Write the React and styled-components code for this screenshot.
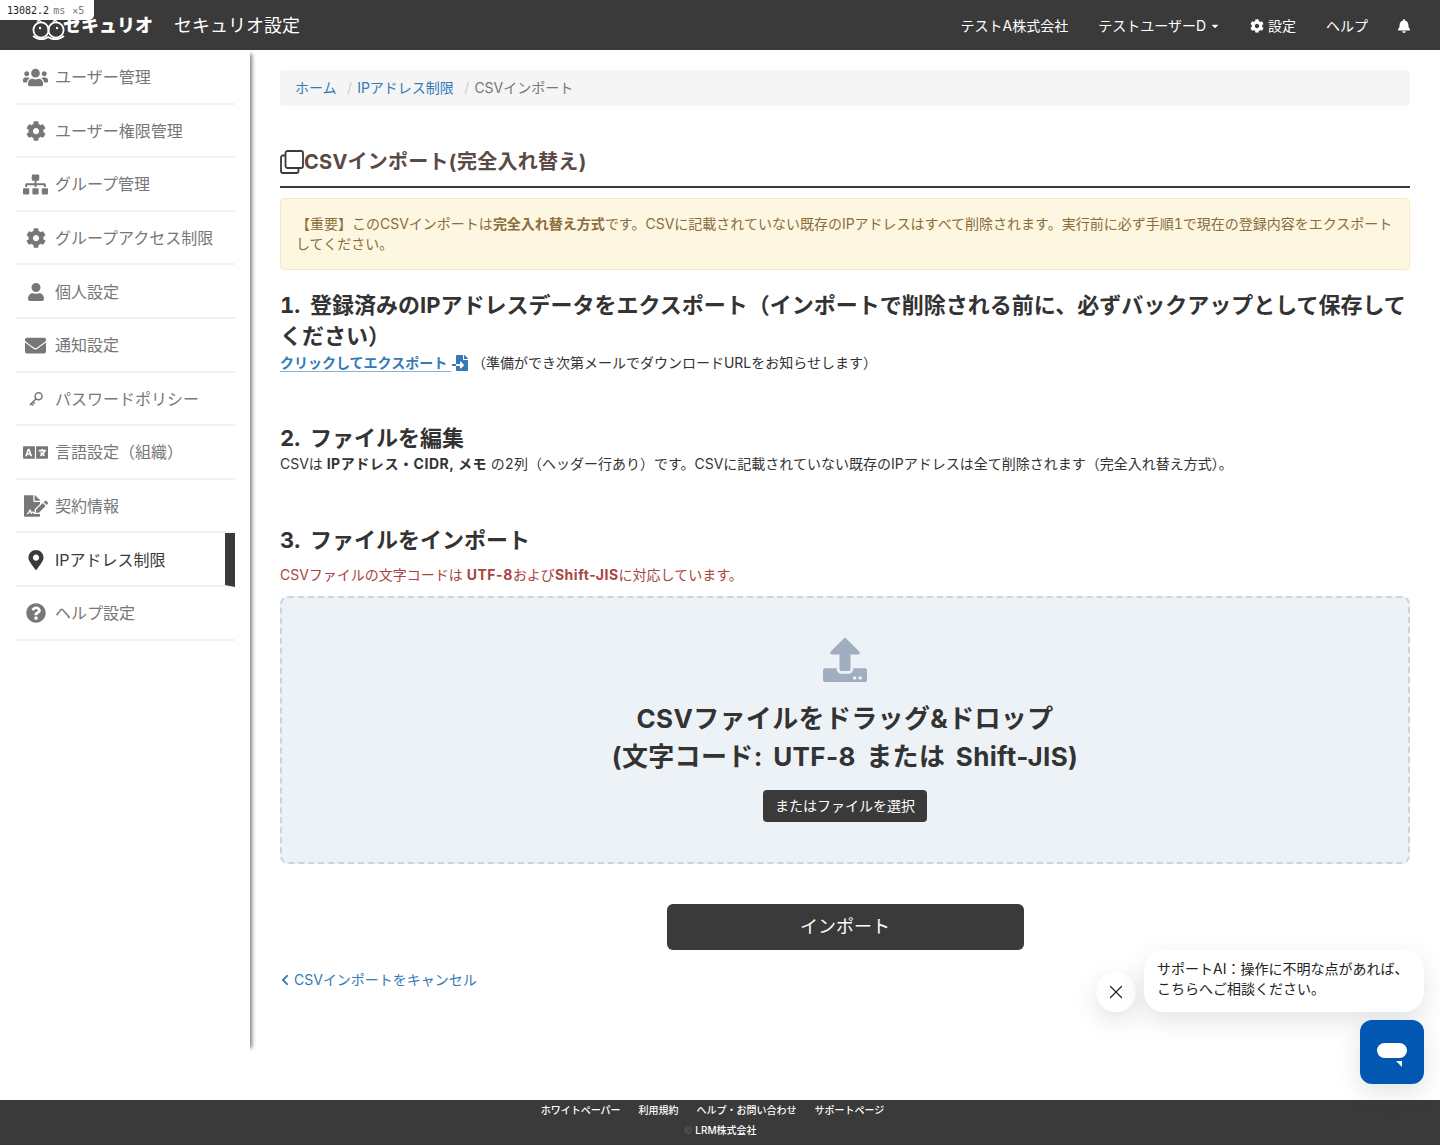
import React from 'react'
import styled, { createGlobalStyle } from 'styled-components'
import {
  FaUsers, FaCog, FaSitemap, FaUser, FaEnvelope, FaLanguage, FaFileSignature,
  FaMapMarkerAlt, FaQuestionCircle, FaBell, FaChevronLeft, FaFileImport, FaUpload, FaCaretDown,
} from 'react-icons/fa'
import { X } from 'lucide-react'

const KeyIcon = () => (
  <svg width="16" height="16" viewBox="0 0 16 16" fill="none" stroke="currentColor" strokeWidth="1.5" strokeLinecap="round">
    <circle cx="10.6" cy="5.2" r="3.5" />
    <path d="M8 7.8 L2.4 13.6 M3.4 12.4 L5 14 M5 10.8 L6.4 12.2" />
  </svg>
)

const menu = [
  { label: 'ユーザー管理', icon: <FaUsers size={25} /> },
  { label: 'ユーザー権限管理', icon: <FaCog size={20} /> },
  { label: 'グループ管理', icon: <FaSitemap size={25} /> },
  { label: 'グループアクセス制限', icon: <FaCog size={20} /> },
  { label: '個人設定', icon: <FaUser size={18} /> },
  { label: '通知設定', icon: <FaEnvelope size={21} /> },
  { label: 'パスワードポリシー', icon: <KeyIcon /> },
  { label: '言語設定（組織）', icon: <FaLanguage size={25} /> },
  { label: '契約情報', icon: <FaFileSignature size={24} /> },
  { label: 'IPアドレス制限', icon: <FaMapMarkerAlt size={20} />, active: true },
  { label: 'ヘルプ設定', icon: <FaQuestionCircle size={20} /> },
]

const footerLinks = ['ホワイトペーパー', '利用規約', 'ヘルプ・お問い合わせ', 'サポートページ']

const OwlLogo = () => (
  <LogoMark width="33" height="22" viewBox="0 0 33 22" fill="none" stroke="#fff" strokeWidth="1.8">
    <circle cx="9" cy="12" r="7.6" />
    <circle cx="24" cy="12" r="7.6" />
    <path d="M5 4 L7 2 L9 4 M21 4 L23 2 L25 4" strokeWidth="1.4" />
    <circle cx="8" cy="10" r="1.2" fill="#fff" stroke="none" />
    <circle cx="25" cy="10" r="1.2" fill="#fff" stroke="none" />
    <path d="M1 18 Q9 24 16 19 Q24 24 32 18" />
  </LogoMark>
)

const CopyIcon = () => (
  <svg width="24" height="24" viewBox="0 0 24 24" fill="none" stroke="#3a3a3a" strokeWidth="1.8" strokeLinejoin="round">
    <rect x="5.5" y="1" width="17.5" height="17" rx="2" />
    <path d="M5.5 5.5 H3 a2 2 0 0 0 -2 2 V21 a2 2 0 0 0 2 2 H16.5 a2 2 0 0 0 2 -2 V18" />
  </svg>
)

const ChatIcon = () => (
  <svg width="32" height="26" viewBox="0 0 32 26" fill="#fff">
    <rect x="1" y="1" width="30" height="15" rx="7.5" />
    <path d="M20 19 L26 19 L26 25 Z" />
  </svg>
)

export default function App() {
  return (
    <Page>
      <GlobalStyle />
      <PerfTab>
        13082.2<PerfUnit>ms</PerfUnit><PerfCount>✕5</PerfCount>
      </PerfTab>

      <Header>
        <Brand>
          <OwlLogo />
          <LogoText>セキュリオ</LogoText>
          <AppTitle>セキュリオ設定</AppTitle>
        </Brand>
        <Nav>
          <NavItem>テストA株式会社</NavItem>
          <NavItem>テストユーザーD<FaCaretDown size={10} /></NavItem>
          <NavItem><FaCog size={14} />設定</NavItem>
          <NavItem>ヘルプ</NavItem>
          <NavItem $tight><FaBell size={14} /></NavItem>
        </Nav>
      </Header>

      <Body>
        <Sidebar>
          {menu.map(item => (
            <MenuItem key={item.label} $active={item.active}>
              <MenuIcon>{item.icon}</MenuIcon>
              {item.label}
            </MenuItem>
          ))}
        </Sidebar>

        <Main>
          <Breadcrumb>
            <Crumb href="#">ホーム</Crumb>
            <CrumbSep>/</CrumbSep>
            <Crumb href="#">IPアドレス制限</Crumb>
            <CrumbSep>/</CrumbSep>
            <span>CSVインポート</span>
          </Breadcrumb>

          <PageTitle><CopyIcon />CSVインポート(完全入れ替え)</PageTitle>

          <Alert>
            【重要】このCSVインポートは<strong>完全入れ替え方式</strong>です。CSVに記載されていない既存のIPアドレスはすべて削除されます。実行前に必ず手順1で現在の登録内容をエクスポートしてください。
          </Alert>

          <Section>
            <StepTitle>1. 登録済みのIPアドレスデータをエクスポート（インポートで削除される前に、必ずバックアップとして保存してください）</StepTitle>
            <ExportRow>
              <ExportLink href="#">クリックしてエクスポート <FaFileImport size={16} /></ExportLink>（準備ができ次第メールでダウンロードURLをお知らせします）
            </ExportRow>
          </Section>

          <Section>
            <StepTitle>2. ファイルを編集</StepTitle>
            <Text>
              CSVは <Latin>IPアドレス・CIDR, メモ</Latin> の2列（ヘッダー行あり）です。CSVに記載されていない既存のIPアドレスは全て削除されます（完全入れ替え方式）。
            </Text>
          </Section>

          <Section>
            <StepTitle>3. ファイルをインポート</StepTitle>
            <Notice>
              CSVファイルの文字コードは <Latin>UTF-8</Latin>および<Latin>Shift-JIS</Latin>に対応しています。
            </Notice>
            <DropZone>
              <FaUpload size={44} color="#a0aec0" />
              <DropText>CSVファイルをドラッグ&ドロップ<br />(文字コード: UTF-8 または Shift-JIS)</DropText>
              <SelectButton>またはファイルを選択</SelectButton>
            </DropZone>
          </Section>

          <ImportButton>インポート</ImportButton>
          <CancelLink href="#"><FaChevronLeft size={12} />CSVインポートをキャンセル</CancelLink>
        </Main>
      </Body>

      <Footer>
        <FooterLinks>
          {footerLinks.map(l => <span key={l}>{l}</span>)}
        </FooterLinks>
        <Copyright><CopyMark>©</CopyMark> LRM株式会社</Copyright>
      </Footer>

      <ChatWidget>
        <ChatPrompt>
          <CloseButton><X size={22} strokeWidth={1.3} /></CloseButton>
          <ChatBubble>サポートAI：操作に不明な点があれば、<br />こちらへご相談ください。</ChatBubble>
        </ChatPrompt>
        <ChatButton><ChatIcon /></ChatButton>
      </ChatWidget>
    </Page>
  )
}

const GlobalStyle = createGlobalStyle`
  * { box-sizing: border-box; }
  body {
    margin: 0;
    background: #fff;
    color: #333;
    font-family: Inter, "Noto Sans CJK JP", sans-serif;
    font-size: 14px;
    font-variant-numeric: tabular-nums;
    line-height: 20px;
  }
`

const Page = styled.div`
  position: relative;
  width: 1440px;
  height: 1145px;
  overflow: hidden;
`

const PerfTab = styled.div`
  position: absolute;
  top: 0;
  left: 0;
  z-index: 10;
  width: 94px;
  height: 20px;
  padding-left: 7px;
  background: #fff;
  border-bottom-right-radius: 5px;
  color: #222;
  font-family: "DejaVu Sans Mono", monospace;
  font-size: 10px;
  line-height: 21px;
  white-space: nowrap;
`

const PerfUnit = styled.span`
  margin-left: 4px;
  color: #777;
`

const PerfCount = styled(PerfUnit)`
  margin-left: 7px;
`

const Header = styled.header`
  position: relative;
  z-index: 5;
  display: flex;
  align-items: center;
  justify-content: space-between;
  height: 50px;
  padding-top: 1px;
  background: #3a3a3a;
  color: #fff;
`

const Brand = styled.div`
  display: flex;
  align-items: center;
  padding-left: 32px;
`

const LogoMark = styled.svg`
  margin-top: 6px;
`

const LogoText = styled.span`
  margin: 0 21px 0 -2px;
  font-size: 18px;
  font-weight: 900;
`

const AppTitle = styled.span`
  font-size: 18px;
`

const Nav = styled.nav`
  display: flex;
  align-items: center;
  padding-right: 14px;
`

const NavItem = styled.a`
  display: flex;
  align-items: center;
  gap: 4px;
  padding: 0 15px;
  padding-left: ${p => (p.$tight ? '14px' : '15px')};
  font-size: 14px;
`

const Body = styled.div`
  display: flex;
  align-items: flex-start;
  height: 1050px;
`

const Sidebar = styled.aside`
  flex: none;
  width: 250px;
  height: 1002px;
  padding: 1px 15px 0;
  background: #fff;
  box-shadow: 6px 0 4px -4px rgba(0, 0, 0, 0.5);
`

const MenuItem = styled.div`
  display: flex;
  align-items: center;
  height: 53.6px;
  padding: 1px 0 0 5px;
  border-bottom: 2px solid #f2f2f2;
  border-right: ${p => (p.$active ? '10px solid #3a3a3a' : 'none')};
  color: ${p => (p.$active ? '#3a3a3a' : '#777')};
  font-size: 16px;
`

const MenuIcon = styled.span`
  display: flex;
  align-items: center;
  justify-content: center;
  flex: none;
  width: 31px;
  margin-right: 4px;
`

const Main = styled.main`
  flex: 1;
  min-width: 0;
  padding: 20px 30px 0;
`

const Breadcrumb = styled.div`
  display: flex;
  align-items: center;
  height: 36px;
  padding: 0 15px;
  background: #f5f5f5;
  border-radius: 4px;
  color: #777;
`

const Crumb = styled.a`
  color: #337ab7;
  text-decoration: none;
`

const CrumbSep = styled.span`
  padding: 0 5px 0 10.5px;
  color: #ccc;
`

const PageTitle = styled.h2`
  display: flex;
  align-items: center;
  height: 40px;
  margin: 36px 0 10px;
  padding-bottom: 4px;
  border-bottom: 2px solid #3a3a3a;
  box-sizing: content-box;
  color: #5a4a45;
  font-size: 20px;
  font-weight: 700;
  letter-spacing: 0.25px;
`

const Alert = styled.div`
  padding: 15px;
  background: #fdf6e0;
  border: 1px solid #f8e8c4;
  border-radius: 4px;
  color: #8a6d3b;
`

const Section = styled.section`
  margin-top: 20px;

  & + & {
    margin-top: 51px;
  }
`

const StepTitle = styled.h3`
  margin: 0;
  color: #333;
  font-size: 22px;
  font-weight: 700;
  line-height: 31px;
  word-spacing: 4px;
`

const Text = styled.div`
  color: #333;
`

const ExportRow = styled(Text)`
  margin: 1px 0 -1px;
`

const Latin = styled.strong`
  font-variant-numeric: normal;
  letter-spacing: 0.55px;
`

const ExportLink = styled.a`
  margin-right: 3px;
  color: #337ab7;
  font-weight: 700;
  text-decoration: underline;
  text-decoration-color: #89b3d8;
  text-underline-offset: 3px;

  svg {
    margin: 0 1px;
    vertical-align: -3px;
  }
`

const Notice = styled.div`
  margin: 9px 0 11px;
  color: #a94442;
`

const DropZone = styled.div`
  display: flex;
  flex-direction: column;
  align-items: center;
  height: 268px;
  padding-top: 40px;
  background: #edf2f7;
  border: 2px dashed #cbd5e0;
  border-radius: 8px;
`

const DropText = styled.div`
  margin: 18px 0 14px;
  color: #333;
  font-size: 26px;
  font-variant-numeric: normal;
  font-weight: 700;
  letter-spacing: 0.35px;
  line-height: 38px;
  text-align: center;
  word-spacing: 4px;
`

const SelectButton = styled.button`
  height: 32px;
  padding: 0 12px;
  background: #3a3a3a;
  border: none;
  border-radius: 4px;
  color: #fff;
  font: inherit;
  font-size: 14px;
`

const ImportButton = styled.button`
  display: block;
  width: 357px;
  height: 46px;
  margin: 40px auto 20px;
  background: #3a3a3a;
  border: none;
  border-radius: 6px;
  color: #fff;
  font: inherit;
  font-size: 18px;
`

const CancelLink = styled.a`
  display: inline-flex;
  align-items: center;
  gap: 3px;
  margin-left: -1px;
  color: #337ab7;
  text-decoration: none;
`

const Footer = styled.footer`
  display: flex;
  flex-direction: column;
  align-items: center;
  height: 45px;
  background: #3a3a3a;
  color: #fff;
  font-size: 10px;
  font-weight: 500;
`

const FooterLinks = styled.div`
  display: flex;
  gap: 18px;
  padding-right: 15px;
`

const Copyright = styled.div`
  margin-top: 0;
`

const CopyMark = styled.span`
  color: #555;
`

const ChatWidget = styled.div`
  position: absolute;
  top: 950px;
  right: 16px;
  z-index: 6;
  display: flex;
  flex-direction: column;
  align-items: flex-end;
  gap: 8px;
`

const ChatPrompt = styled.div`
  display: flex;
  align-items: flex-end;
  gap: 8px;
`

const CloseButton = styled.div`
  display: flex;
  align-items: center;
  justify-content: center;
  width: 40px;
  height: 40px;
  background: #fff;
  border-radius: 50%;
  color: #222;
  box-shadow: 0 8px 24px rgba(60, 80, 90, 0.16);
`

const ChatBubble = styled.div`
  width: 280px;
  height: 62px;
  padding: 9px 13px;
  background: #fff;
  border-radius: 20px;
  color: #222;
  box-shadow: 0 8px 24px rgba(60, 80, 90, 0.16);
`

const ChatButton = styled.div`
  display: flex;
  align-items: center;
  justify-content: center;
  width: 64px;
  height: 64px;
  padding-top: 6px;
  background: #0257b0;
  border-radius: 12px;
  box-shadow: 0 8px 24px rgba(60, 80, 90, 0.16);
`
